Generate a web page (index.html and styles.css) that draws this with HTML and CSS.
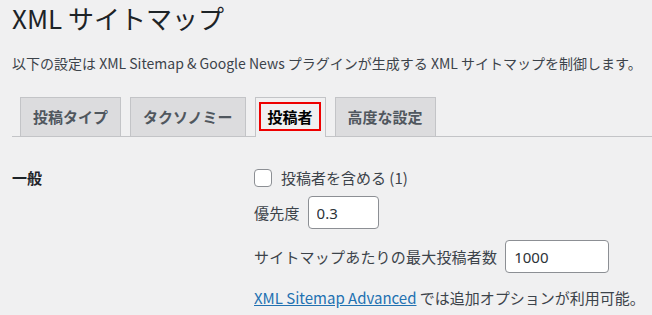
FILE: index.html
```html
<!DOCTYPE html>
<html lang="ja">
<head>
    <meta charset="UTF-8">
    <meta name="viewport" content="width=device-width, initial-scale=1.0">
    <title>XML サイトマップ</title>
    <link rel="stylesheet" href="styles.css">
</head>
<body>
    <div class="wrap">
        <h1 class="title">XML サイトマップ</h1>
        <p class="intro">以下の設定は XML Sitemap &amp; Google News プラグインが生成する XML サイトマップを制御します。</p>

        <nav class="nav-tabs">
            <a class="nav-tab" href="#">投稿タイプ</a>
            <a class="nav-tab" href="#">タクソノミー</a>
            <a class="nav-tab nav-tab-active" href="#"><span class="marked">投稿者</span></a>
            <a class="nav-tab" href="#">高度な設定</a>
        </nav>

        <div class="form-table">
            <div class="form-label">一般</div>
            <div class="form-fields">
                <label class="check">
                    <span class="check-box"></span>
                    投稿者を含める (1)
                </label>
                <label class="field">
                    優先度
                    <input class="text-input small" type="text" value="0.3">
                </label>
                <label class="field">
                    サイトマップあたりの最大投稿者数
                    <input class="text-input medium" type="text" value="1000">
                </label>
                <p class="note"><a href="#">XML Sitemap Advanced</a> では追加オプションが利用可能。</p>
            </div>
        </div>
    </div>
</body>
</html>
```

FILE: styles.css
```css
body {
    margin: 0;
    background-color: #f0f0f1;
    color: #3c434a;
    font-family: "Noto Sans CJK JP", "Noto Sans", sans-serif;
    font-size: 15px;
}

.wrap {
    padding: 0 0 0 12px;
}

.title {
    margin: 0;
    padding-top: 1px;
    height: 34px;
    line-height: 34px;
    font-size: 26px;
    font-weight: 400;
    color: #1d2327;
}

.intro {
    margin: 17px 0 0;
    line-height: 22px;
    font-size: 14px;
    color: #3c434a;
}

.nav-tabs {
    display: flex;
    gap: 9px;
    margin-top: 23px;
    padding-left: 8px;
    border-bottom: 1px solid #c3c4c7;
}

.nav-tab {
    display: block;
    margin-bottom: -1px;
    padding: 0 12px;
    height: 38px;
    line-height: 38px;
    border: 1px solid #c3c4c7;
    border-bottom: none;
    background-color: #dcdcde;
    color: #50575e;
    font-size: 15px;
    font-weight: 700;
    text-decoration: none;
}

.nav-tab-active {
    background-color: #f0f0f1;
    color: #000;
    height: 39px;
}

.marked {
    position: relative;
}

.marked::after {
    content: "";
    position: absolute;
    left: -9px;
    right: -8px;
    top: -4px;
    bottom: -4px;
    border: 2px solid #e00;
}

.form-table {
    display: grid;
    grid-template-columns: 242px 1fr;
    margin-top: 30px;
}

.form-label {
    font-weight: 700;
    color: #1d2327;
    line-height: 22px;
}

.form-fields {
    display: flex;
    flex-direction: column;
    align-items: flex-start;
}

.check {
    display: flex;
    align-items: center;
    gap: 9px;
    line-height: 22px;
}

.check-box {
    width: 18px;
    height: 18px;
    box-sizing: border-box;
    border: 1px solid #8c8f94;
    border-radius: 4px;
    background-color: #fff;
}

.field {
    display: flex;
    align-items: center;
    gap: 8px;
    margin-top: 7px;
    letter-spacing: 0.2px;
}

.field + .field {
    margin-top: 11px;
}

.text-input {
    box-sizing: border-box;
    height: 33px;
    padding: 0 8px;
    border: 1px solid #8c8f94;
    border-radius: 4px;
    background-color: #fff;
    color: #2c3338;
    font-family: "Noto Sans", sans-serif;
    font-size: 15px;
    letter-spacing: 0;
}

.small {
    width: 71px;
}

.medium {
    width: 104px;
}

.note {
    margin: 14px 0 0;
    line-height: 22px;
}

.note a {
    color: #2271b1;
}
```
